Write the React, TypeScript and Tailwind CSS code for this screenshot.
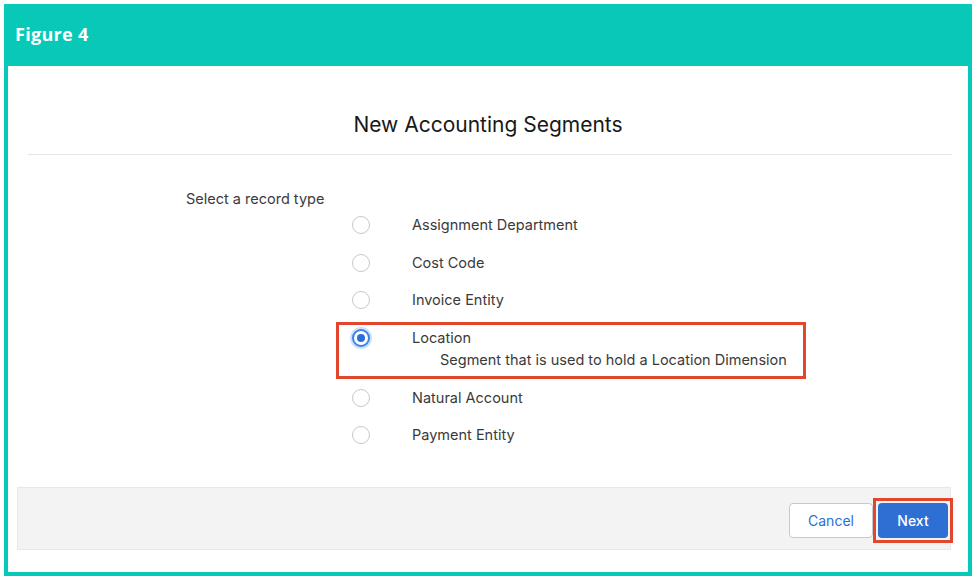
const options = [
    {label: 'Assignment Department'},
    {label: 'Cost Code'},
    {label: 'Invoice Entity'},
    {label: 'Location', description: 'Segment that is used to hold a Location Dimension', selected: true},
    {label: 'Natural Account'},
    {label: 'Payment Entity'},
];

const Radio = ({checked}: { checked?: boolean }) => {
    if (checked) {
        return (
            <span className="flex h-[18px] w-[18px] shrink-0 items-center justify-center rounded-full border-[2px] border-[#3b82e6] bg-white shadow-[0_0_0_2px_#cfe0fb]">
                <span className="h-[8px] w-[8px] rounded-full bg-[#2a6fd6]"/>
            </span>
        );
    }
    return <span className="h-[18px] w-[18px] shrink-0 rounded-full border border-[#c9c9c9] bg-white"/>;
};

export default function App() {
    return (
        <div className="h-[580px] w-[976px] bg-white p-1 font-['Inter',sans-serif]">
            <div className="flex h-full flex-col bg-[#08c9b7] px-1 pb-1">
                <div className="flex h-[62px] items-center px-[7px] pb-[2px] font-['Open_Sans',sans-serif] text-[18px] font-bold tracking-[0.3px] text-white">
                    Figure 4
                </div>
                <div className="flex flex-1 flex-col bg-white">
                    <div className="flex h-[88px] items-center justify-center pt-[30px] text-[21px] text-[#181818]">
                        New Accounting Segments
                    </div>
                    <div className="ml-[20px] mr-[16px] h-px bg-[#e5e5e5]"/>

                    <div className="ml-[178px] mt-[35px] text-[14.5px] leading-[18px] text-[#3a3a3a]">
                        Select a record type
                    </div>

                    <div className="ml-[328px] mt-[-1.5px] w-[470px] text-[14.5px] text-[#3a3a3a]">
                        {options.map((option, index) => {
                            if (option.selected) {
                                return (
                                    <div key={index} className="mt-[3px] h-[57px] border-[3px] border-[#e2462c] pl-[13px]">
                                        <div className="flex h-[26px] items-center">
                                            <Radio checked/>
                                            <span className="ml-[42px]">{option.label}</span>
                                        </div>
                                        <div className="flex h-[18px] items-center pl-[88px]">{option.description}</div>
                                    </div>
                                );
                            }
                            return (
                                <div key={index} className="flex h-[37.5px] items-center pl-[16px]">
                                    <Radio/>
                                    <span className="ml-[42px]">{option.label}</span>
                                </div>
                            );
                        })}
                    </div>

                    <div className="mb-[22px] ml-[9px] mr-[17px] mt-auto flex h-[63px] items-center justify-end border border-[#e8e8e8] bg-[#f3f3f3] pr-[2px] pt-[3px]">
                        <button className="h-[35px] w-[84px] rounded-[4px] border border-[#c9c9c9] bg-white text-[14px] text-[#2a6fd6]">
                            Cancel
                        </button>
                        <div className="-mr-[5px] border-[3px] border-[#e2462c] p-[2px]">
                            <button className="block h-[35px] w-[70px] rounded-[4px] bg-[#2e6fd3] text-[14px] font-medium text-white">
                                Next
                            </button>
                        </div>
                    </div>
                </div>
            </div>
        </div>
    );
}
